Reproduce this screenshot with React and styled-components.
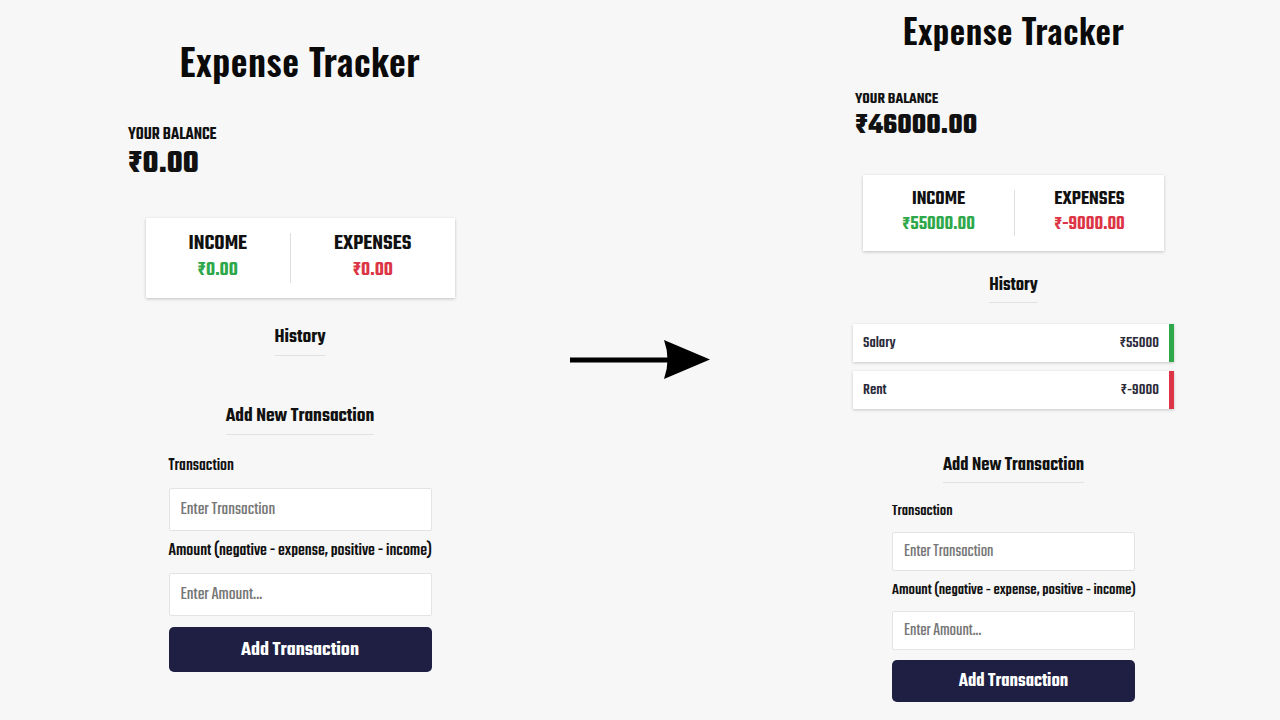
import React from "react";
import styled, { createGlobalStyle } from "styled-components";

const S = {
  lg: {
    panelLeft: 128, panelWidth: 344, padTop: 38,
    title: 36.5, titleLh: 46,
    balIndent: 0, balLabel: 17, balLabelLh: 16, balLabelMt: 43,
    bal: 32, balLh: 30, balMt: 6,
    cardW: 309, cardMt: 39, cardPad: 15, divH: 50,
    cardHead: 22, cardHeadLh: 22, cardAmt: 20, cardAmtLh: 20, cardAmtMt: 6,
    h3: 20, h3Lh: 22, h3Pad: 6, histMt: 29, addMt: 50, listMt: 20,
    formW: 263, label: 17.3, labelLh: 18, labelMt1: 22, labelMt2: 11,
    inputMt: 13, inputH: 43, ph: 18.5, btnMt: 11, btnH: 45, btn: 20.7,
    itemH: 38, item: 16,
  },
  sm: {
    panelLeft: 141, panelWidth: 321, padTop: 10,
    title: 33.5, titleLh: 40,
    balIndent: 2, balLabel: 16, balLabelLh: 15, balLabelMt: 42,
    bal: 29, balLh: 27, balMt: 6,
    cardW: 301, cardMt: 35, cardPad: 15, divH: 46,
    cardHead: 20, cardHeadLh: 20, cardAmt: 19, cardAmtLh: 18, cardAmtMt: 6,
    h3: 19, h3Lh: 20, h3Pad: 6, histMt: 25, addMt: 47, listMt: 21,
    formW: 243, label: 16, labelLh: 16, labelMt1: 21, labelMt2: 12,
    inputMt: 12, inputH: 39, ph: 17.5, btnMt: 10, btnH: 42, btn: 19.2,
    itemH: 38, item: 16,
  },
};
const v = (k) => ({ $s }) => S[$s][k];

const FONT = `"Teko", "DejaVu Sans Condensed", sans-serif`;
const TITLE_FONT = `"Oswald", "DejaVu Sans Condensed", sans-serif`;

const Global = createGlobalStyle`
  * { box-sizing: border-box; }
  html, body { margin: 0; padding: 0; background: #f7f7f7; }
  body { font-family: ${FONT}; color: #111; }
`;

const Page = styled.div`
  width: 1280px;
  height: 720px;
  display: flex;
  align-items: flex-start;
  overflow: hidden;
`;

const Panel = styled.div`
  margin-left: ${v("panelLeft")}px;
  width: ${v("panelWidth")}px;
  padding-top: ${v("padTop")}px;
  display: flex;
  flex-direction: column;
`;

const Title = styled.h2`
  margin: 0;
  text-align: center;
  font-family: ${TITLE_FONT};
  font-size: ${v("title")}px;
  line-height: ${v("titleLh")}px;
  font-weight: 600;
  letter-spacing: 0.5px;
  color: #0a0a0a;
`;

const BalanceLabel = styled.h4`
  margin: ${v("balLabelMt")}px 0 0 ${v("balIndent")}px;
  font-size: ${v("balLabel")}px;
  line-height: ${v("balLabelLh")}px;
  font-weight: 600;
  text-transform: uppercase;
`;

const Balance = styled.h1`
  margin: ${v("balMt")}px 0 0 ${v("balIndent")}px;
  font-size: ${v("bal")}px;
  line-height: ${v("balLh")}px;
  font-weight: 700;
`;

const Card = styled.div`
  align-self: center;
  width: ${v("cardW")}px;
  margin-top: ${v("cardMt")}px;
  padding: ${v("cardPad")}px 0;
  background: #fff;
  box-shadow: 0 1px 3px rgba(0, 0, 0, 0.22);
  display: flex;
  align-items: flex-start;
`;

const Col = styled.div`
  flex: 1 1 auto;
  text-align: center;
`;

const Divider = styled.div`
  width: 1px;
  height: ${v("divH")}px;
  background: #dedede;
`;

const CardHead = styled.h4`
  margin: 0;
  font-size: ${v("cardHead")}px;
  line-height: ${v("cardHeadLh")}px;
  font-weight: 600;
  text-transform: uppercase;
`;

const Money = styled.p`
  margin: ${v("cardAmtMt")}px 0 0;
  font-size: ${v("cardAmt")}px;
  line-height: ${v("cardAmtLh")}px;
  font-weight: 600;
  color: ${({ $plus }) => ($plus ? "#2ea84a" : "#dc3545")};
`;

const SectionTitle = styled.h3`
  align-self: center;
  margin: ${({ $mt }) => $mt}px 0 0;
  padding-bottom: ${v("h3Pad")}px;
  border-bottom: 1px solid #e2e2e2;
  font-size: ${v("h3")}px;
  line-height: ${v("h3Lh")}px;
  font-weight: 600;
`;

const List = styled.ul`
  list-style: none;
  margin: ${v("listMt")}px 0 0;
  padding: 0;
  display: flex;
  flex-direction: column;
  gap: 9px;
`;

const Item = styled.li`
  height: ${v("itemH")}px;
  background: #fff;
  box-shadow: 0 1px 3px rgba(0, 0, 0, 0.2);
  border-right: 5px solid ${({ $plus }) => ($plus ? "#2ea84a" : "#dc3545")};
  display: flex;
  align-items: center;
  justify-content: space-between;
  padding: 0 10px;
  font-size: ${v("item")}px;
  font-weight: 500;
  color: #2b2b3a;
`;

const Form = styled.form`
  align-self: center;
  width: ${v("formW")}px;
  display: flex;
  flex-direction: column;
`;

const Label = styled.label`
  margin-top: ${({ $mt }) => $mt}px;
  font-size: ${v("label")}px;
  line-height: ${v("labelLh")}px;
  font-weight: 500;
  color: #111;
  white-space: nowrap;
`;

const Input = styled.input`
  margin-top: ${v("inputMt")}px;
  height: ${v("inputH")}px;
  width: 100%;
  border: 1px solid #e4e4e4;
  border-radius: 2px;
  background: #fff;
  padding: 0 11px;
  font-family: ${FONT};
  font-size: ${v("ph")}px;
  font-weight: 400;
  outline: none;
  &::placeholder { color: #777; }
`;

const Button = styled.button`
  margin-top: ${v("btnMt")}px;
  height: ${v("btnH")}px;
  width: 100%;
  border: 0;
  border-radius: 5px;
  background: #1e1f42;
  color: #fff;
  font-family: ${FONT};
  font-size: ${v("btn")}px;
  font-weight: 600;
  cursor: pointer;
`;

const ArrowWrap = styled.div`
  margin: 337px 0 0 98px;
  width: 142px;
  height: 46px;
  display: flex;
`;

const Arrow = () => (
  <svg width="142" height="46" viewBox="0 0 142 46">
    <rect x="0" y="20.5" width="100" height="5" fill="#000" />
    <path d="M94 3 L140 22.5 L94 42 Q101 22.5 94 3 Z" fill="#000" />
  </svg>
);

const data = [
  { id: 1, text: "Salary", amount: 55000 },
  { id: 2, text: "Rent", amount: -9000 },
];

function Tracker({ $s, items }) {
  const amounts = items.map((i) => i.amount);
  const total = amounts.reduce((a, b) => a + b, 0).toFixed(2);
  const inc = amounts.filter((a) => a > 0).reduce((a, b) => a + b, 0).toFixed(2);
  const exp = amounts.filter((a) => a < 0).reduce((a, b) => a + b, 0).toFixed(2);
  return (
    <Panel $s={$s}>
      <Title $s={$s}>Expense Tracker</Title>
      <BalanceLabel $s={$s}>Your Balance</BalanceLabel>
      <Balance $s={$s}>₹{total}</Balance>
      <Card $s={$s}>
        <Col>
          <CardHead $s={$s}>Income</CardHead>
          <Money $s={$s} $plus>₹{inc}</Money>
        </Col>
        <Divider $s={$s} />
        <Col>
          <CardHead $s={$s}>Expenses</CardHead>
          <Money $s={$s}>₹{exp}</Money>
        </Col>
      </Card>
      <SectionTitle $s={$s} $mt={S[$s].histMt}>History</SectionTitle>
      {items.length > 0 && (
        <List $s={$s}>
          {items.map((i) => (
            <Item key={i.id} $s={$s} $plus={i.amount > 0}>
              <span>{i.text}</span>
              <span>₹{i.amount}</span>
            </Item>
          ))}
        </List>
      )}
      <SectionTitle $s={$s} $mt={S[$s].addMt}>Add New Transaction</SectionTitle>
      <Form $s={$s} onSubmit={(e) => e.preventDefault()}>
        <Label $s={$s} $mt={S[$s].labelMt1}>Transaction</Label>
        <Input $s={$s} type="text" placeholder="Enter Transaction" />
        <Label $s={$s} $mt={S[$s].labelMt2}>Amount (negative - expense, positive - income)</Label>
        <Input $s={$s} type="number" placeholder="Enter Amount..." />
        <Button $s={$s} type="submit">Add Transaction</Button>
      </Form>
    </Panel>
  );
}

export default function App() {
  return (
    <>
      <Global />
      <Page>
        <Tracker $s="lg" items={[]} />
        <ArrowWrap>
          <Arrow />
        </ArrowWrap>
        <Tracker $s="sm" items={data} />
      </Page>
    </>
  );
}
